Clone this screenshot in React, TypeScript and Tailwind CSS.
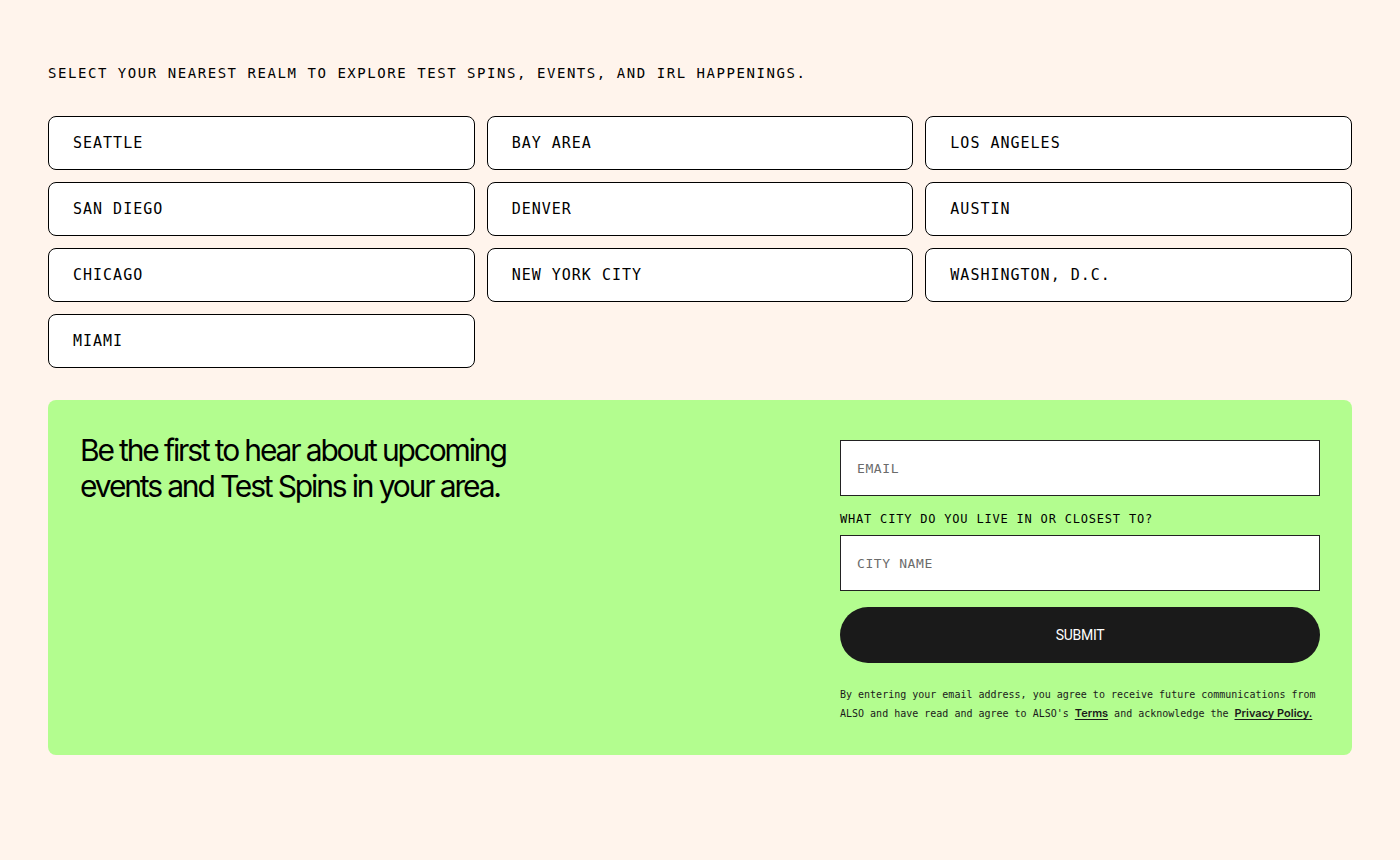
import { useState } from 'react';

const cities = [
  'SEATTLE',
  'BAY AREA',
  'LOS ANGELES',
  'SAN DIEGO',
  'DENVER',
  'AUSTIN',
  'CHICAGO',
  'NEW YORK CITY',
  'WASHINGTON, D.C.',
  'MIAMI',
];

const mono = "font-['DejaVu_Sans_Mono','Liberation_Mono',monospace]";

function App() {
  const [email, setEmail] = useState('');
  const [city, setCity] = useState('');

  return (
    <div className="min-h-[860px] bg-[#fff4ec] px-12 pt-[64px] pb-[100px] text-black">
      <p className={`${mono} text-[14px] leading-[18px] tracking-[1.55px]`}>
        SELECT YOUR NEAREST REALM TO EXPLORE TEST SPINS, EVENTS, AND IRL HAPPENINGS.
      </p>

      <div className="mt-[34px] grid grid-cols-3 gap-3">
        {cities.map(c => (
          <button
            key={c}
            className={`${mono} flex h-[54px] items-center rounded-lg border border-black bg-white pl-6 text-left text-[15px] tracking-[1px]`}
          >
            {c}
          </button>
        ))}
      </div>

      <div className="mt-8 flex justify-between rounded-lg bg-[#b3fd8f] px-8 pt-10 pb-[32px]">
        <h2 className="-mt-[8px] font-['Inter',sans-serif] text-[30px] leading-[36px] tracking-[-2.15px]">
          Be the first to hear about upcoming
          <br />
          events and Test Spins in your area.
        </h2>

        <form className="flex w-[480px] flex-col" onSubmit={e => e.preventDefault()}>
          <input
            type="email"
            placeholder="EMAIL"
            value={email}
            onChange={e => setEmail(e.target.value)}
            className={`${mono} h-[56px] border border-[#222] bg-white px-4 text-[13px] tracking-[0.6px] placeholder:text-[#6b6b6b] outline-none`}
          />
          <label className={`${mono} mt-[16px] mb-[9px] text-[12px] leading-[14px] tracking-[0.8px]`}>
            WHAT CITY DO YOU LIVE IN OR CLOSEST TO?
          </label>
          <input
            type="text"
            placeholder="CITY NAME"
            value={city}
            onChange={e => setCity(e.target.value)}
            className={`${mono} h-[56px] border border-[#222] bg-white px-4 text-[13px] tracking-[0.6px] placeholder:text-[#6b6b6b] outline-none`}
          />
          <button
            type="submit"
            className="mt-4 h-[56px] rounded-full bg-[#1a1a1a] font-['Roboto',sans-serif] text-[14px] font-normal tracking-[-0.3px] text-white"
          >
            SUBMIT
          </button>
          <p className={`${mono} mt-[22px] text-[10px] leading-[19px] tracking-[0px] text-[#1a1a1a]`}>
            By entering your email address, you agree to receive future communications from ALSO and
            have read and agree to ALSO's
            <a href="#" className="mx-[6px] inline-block font-['Inter',sans-serif] text-[11px] leading-[19px] font-semibold underline underline-offset-2">
              Terms
            </a>
            and acknowledge the
            <a href="#" className="ml-[6px] inline-block font-['Inter',sans-serif] text-[11px] leading-[19px] font-semibold underline underline-offset-2">
              Privacy Policy.
            </a>
          </p>
        </form>
      </div>
    </div>
  );
}

export default App;
